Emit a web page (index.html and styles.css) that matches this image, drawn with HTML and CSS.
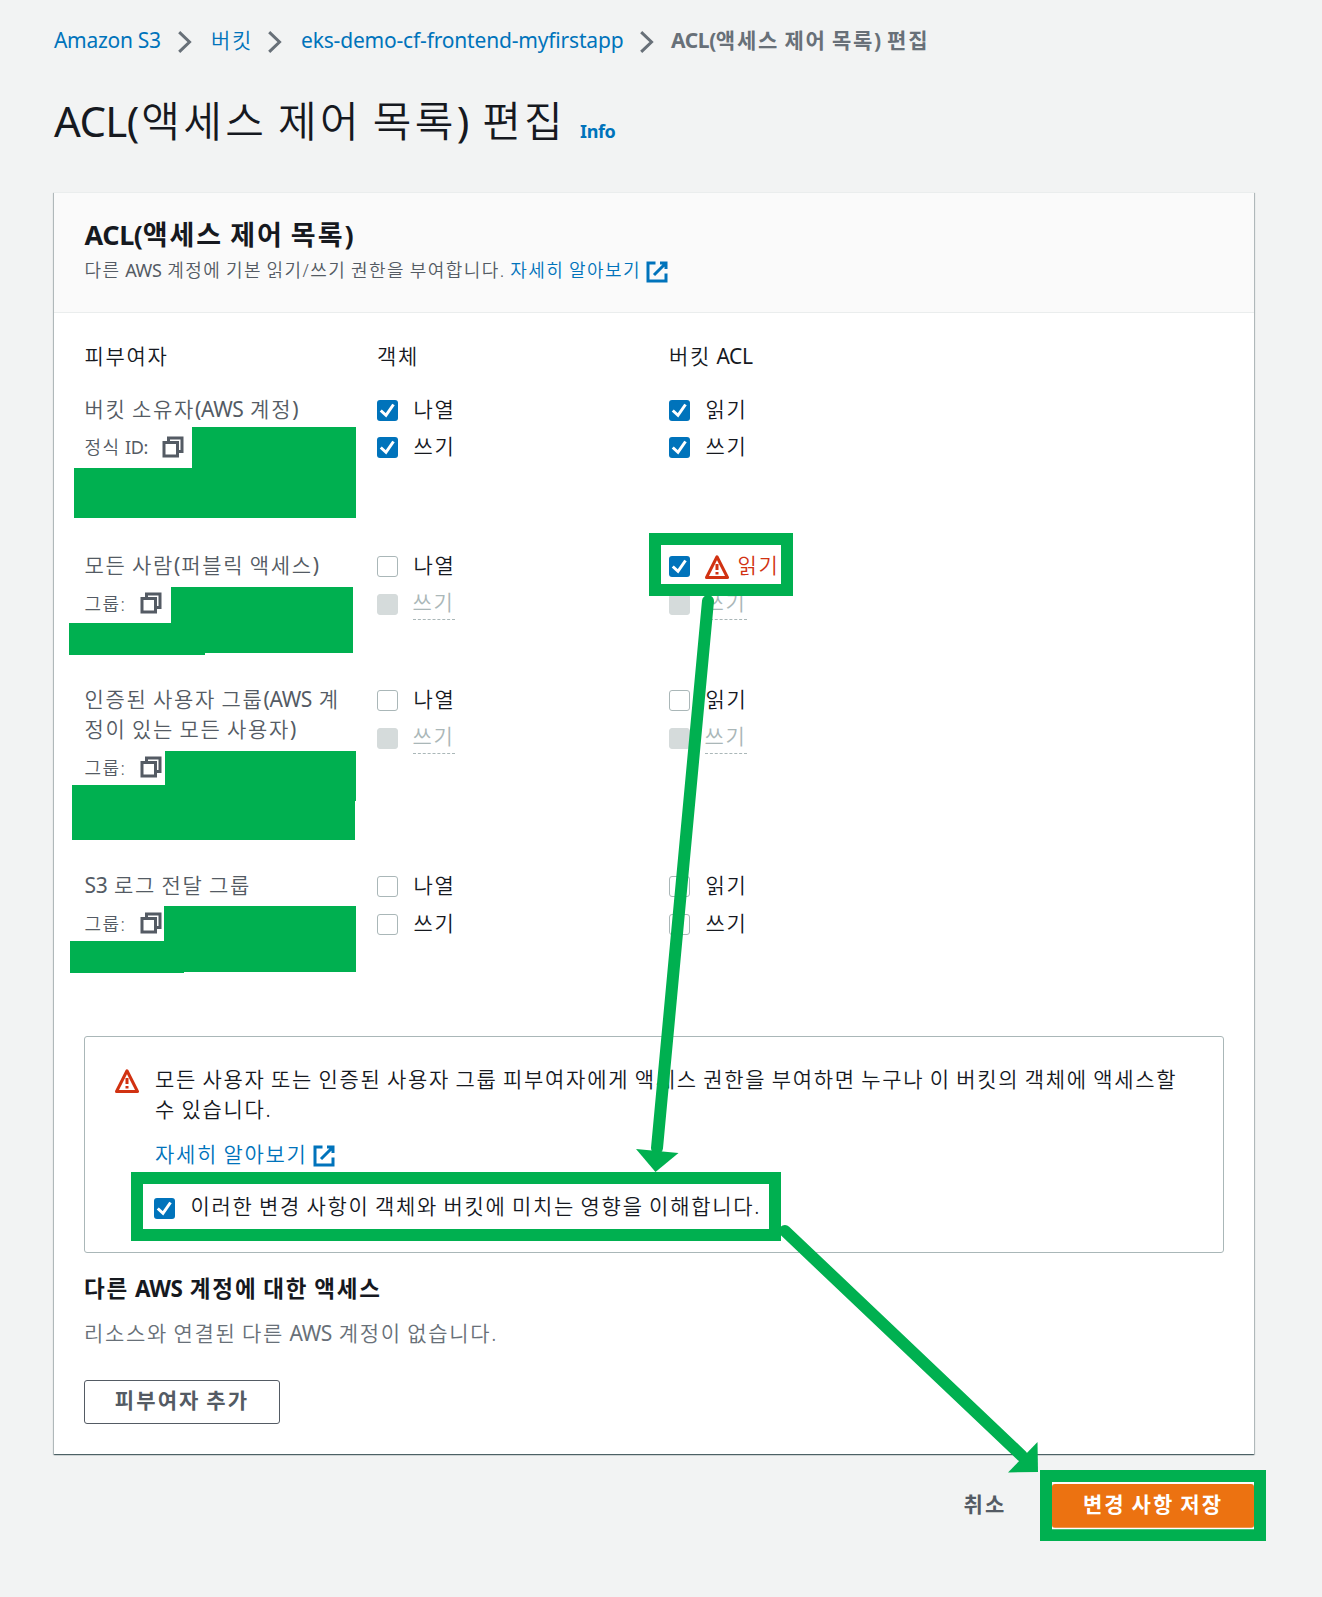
FILE: index.html
```html
<!DOCTYPE html>
<html lang="ko">
<head>
<meta charset="utf-8">
<title>ACL(액세스 제어 목록) 편집</title>
<link rel="stylesheet" href="styles.css">
</head>
<body>
<svg class="defs" aria-hidden="true">
  <symbol id="chevron" viewBox="0 0 14 22"><path d="M1.2 1.2L11.5 11L1.2 20.8" fill="none" stroke="#687078" stroke-width="3"/></symbol>
  <symbol id="external" viewBox="0 0 16 16"><path d="M10 2h4v4M6 10l8-8M14 9.05V14H2V2h5" fill="none" stroke="#0073bb" stroke-width="2"/></symbol>
  <symbol id="copy" viewBox="0 0 16 16"><path d="M2 5h9v9H2zM5 5V2h9v9h-3" fill="none" stroke="#545b64" stroke-width="2"/></symbol>
  <symbol id="warning" viewBox="0 0 16 16"><path d="M8 1.2L15 15H1z" fill="none" stroke="#d13212" stroke-width="2" stroke-linejoin="round"/><path d="M8 6v4M8 11.4v1.6" fill="none" stroke="#d13212" stroke-width="2"/></symbol>
  <symbol id="tick" viewBox="0 0 14 14"><path d="M2.5 7L6 10.2L11 3" fill="none" stroke="#fff" stroke-width="2"/></symbol>
</svg>

<nav class="breadcrumb">
  <a class="latin crumb-root">Amazon S3</a>
  <svg><use href="#chevron"/></svg>
  <a class="crumb-list">버킷</a>
  <svg><use href="#chevron"/></svg>
  <a class="latin crumb-bucket">eks-demo-cf-frontend-myfirstapp</a>
  <svg><use href="#chevron"/></svg>
  <b><span class="latin">ACL(</span>액세스 제어 목록<span class="latin">)</span> 편집</b>
</nav>

<header class="page-title">
  <h1><span class="latin">ACL(</span>액세스 제어 목록<span class="latin">)</span> 편집</h1>
  <a class="latin info">Info</a>
</header>

<main class="card">
  <header class="card-head">
    <h2><span class="latin">ACL(</span>액세스 제어 목록<span class="latin">)</span></h2>
    <p>다른 <span class="latin">AWS</span> 계정에 기본 읽기/쓰기 권한을 부여합니다. <a>자세히 알아보기</a><svg class="icon ext"><use href="#external"/></svg></p>
  </header>
  <section class="card-body">
    <div class="grants">
      <div class="th">피부여자</div><div class="th">객체</div><div class="th">버킷 <span class="latin">ACL</span></div>

      <div class="who">버킷 소유자<span class="latin">(AWS</span> 계정<span class="latin">)</span>
        <div class="sub">정식 <span class="latin">ID:</span><svg class="icon"><use href="#copy"/></svg></div></div>
      <div class="perms">
        <label><i class="box on"><svg><use href="#tick"/></svg></i>나열</label>
        <label><i class="box on"><svg><use href="#tick"/></svg></i>쓰기</label></div>
      <div class="perms">
        <label><i class="box on"><svg><use href="#tick"/></svg></i>읽기</label>
        <label><i class="box on"><svg><use href="#tick"/></svg></i>쓰기</label></div>

      <div class="who">모든 사람<span class="latin">(</span>퍼블릭 액세스<span class="latin">)</span>
        <div class="sub group">그룹:<svg class="icon"><use href="#copy"/></svg></div></div>
      <div class="perms">
        <label><i class="box"></i>나열</label>
        <label class="off"><i class="box"></i><span>쓰기</span></label></div>
      <div class="perms">
        <label class="danger"><i class="box on"><svg><use href="#tick"/></svg></i><svg class="icon"><use href="#warning"/></svg>읽기</label>
        <label class="off"><i class="box"></i><span>쓰기</span></label></div>

      <div class="who">인증된 사용자 그룹<span class="latin">(AWS</span> 계<br>정이 있는 모든 사용자<span class="latin">)</span>
        <div class="sub group">그룹:<svg class="icon"><use href="#copy"/></svg></div></div>
      <div class="perms">
        <label><i class="box"></i>나열</label>
        <label class="off"><i class="box"></i><span>쓰기</span></label></div>
      <div class="perms">
        <label><i class="box"></i>읽기</label>
        <label class="off"><i class="box"></i><span>쓰기</span></label></div>

      <div class="who"><span class="latin">S3</span> 로그 전달 그룹
        <div class="sub group">그룹:<svg class="icon"><use href="#copy"/></svg></div></div>
      <div class="perms">
        <label><i class="box"></i>나열</label>
        <label><i class="box"></i>쓰기</label></div>
      <div class="perms">
        <label><i class="box"></i>읽기</label>
        <label><i class="box"></i>쓰기</label></div>
    </div>

    <div class="alert">
      <svg class="icon"><use href="#warning"/></svg>
      <div>
        <p>모든 사용자 또는 인증된 사용자 그룹 피부여자에게 액세스 권한을 부여하면 누구나 이 버킷의 객체에 액세스할<br>수 있습니다.</p>
        <p class="more"><a>자세히 알아보기</a><svg class="icon ext"><use href="#external"/></svg></p>
        <label><i class="box on"><svg><use href="#tick"/></svg></i>이러한 변경 사항이 객체와 버킷에 미치는 영향을 이해합니다.</label>
      </div>
    </div>

    <h3>다른 <span class="latin">AWS</span> 계정에 대한 액세스</h3>
    <p class="empty">리소스와 연결된 다른 <span class="latin">AWS</span> 계정이 없습니다.</p>
    <button class="btn">피부여자 추가</button>
  </section>
</main>

<footer class="actions">
  <button class="btn link">취소</button>
  <button class="btn primary">변경 사항 저장</button>
</footer>

<svg class="markup" viewBox="0 0 1322 1597" aria-hidden="true">
  <g fill="#00b050" shape-rendering="crispEdges">
    <path d="M192 427H356V518H74V468H192z"/>
    <path d="M171 587H353V653H205V655H69V623H171z"/>
    <path d="M165 751H356V801H355V840H72V785H165z"/>
    <path d="M164 906H356V972H184V973H70V941H164z"/>
  </g>
  <g fill="none" stroke="#00b050" stroke-width="12" shape-rendering="crispEdges">
    <path d="M655 539H787V590H655z"/>
    <path d="M137 1178H775V1235H137z"/>
    <path d="M1046 1476H1260V1535H1046z"/>
  </g>
  <path d="M1052 1483H1254M1052 1528.500H1254" stroke="#fff" stroke-width="1.500"/>
  <g stroke="#00b050" stroke-width="12" stroke-linecap="round">
    <path d="M708 601L657 1148"/><path d="M785 1231L1022 1456"/>
  </g>
  <g fill="#00b050"><path d="M636 1149L678.500 1153L655.500 1172z"/><path d="M1037.500 1442L1038 1472L1008 1472.500z"/></g>
</svg>
</body>
</html>
```
FILE: styles.css
```css
* { box-sizing: border-box; }
body {
  margin: 0; padding-top: 25px; position: relative; height: 1597px; overflow: hidden;
  background: #f2f3f3; color: #16191f;
  font: 350 21px/30px "Noto Sans", "Noto Sans CJK KR", sans-serif;
  letter-spacing: 1.7px; word-spacing: -1.7px; white-space: nowrap;
}
h1, h2, h3, p { margin: 0; }
a { color: #0073bb; text-decoration: none; }
.defs { position: absolute; width: 0; height: 0; }
.latin { font-weight: 400; letter-spacing: -0.4px; word-spacing: 0; margin-right: .06em; }
b .latin, h2 .latin, h3 .latin { font-weight: 700; }
.icon { width: 24px; height: 24px; flex: none; }

.breadcrumb { display: flex; align-items: center; height: 30px; margin-left: 54px; }
.breadcrumb svg { width: 14px; height: 22px; flex: none; margin: 3px 19px 0 17px; }
.breadcrumb .latin { margin-right: 0; }
.crumb-root { width: 107px; letter-spacing: -0.3px; }
.crumb-list { width: 40px; }
.latin.crumb-bucket { width: 322px; letter-spacing: -0.18px; }
.breadcrumb b { color: #687078; font-weight: 700; margin-left: -2px; }
.breadcrumb b .latin:last-child { margin-right: 1px; }

.page-title { display: flex; align-items: baseline; margin: 36px 0 0 54px; height: 101px; }
h1 { font-size: 42px; line-height: 60px; font-weight: 350; letter-spacing: 3.3px; word-spacing: -3.3px; }
h1 .latin { letter-spacing: -0.6px; }
.latin.info { font-size: 18px; font-weight: 700; margin-left: 14px; position: relative; top: 1px; }

.card {
  width: 1200px; height: 1262px; margin-left: 54px; background: #fff;
  box-shadow: 0 1px 1px rgba(0,28,36,.5), 1px 1px 1px rgba(0,28,36,.2), -1px 1px 1px rgba(0,28,36,.2);
  border-top: 1px solid #eaeded;
}
.card-head { height: 120px; background: #fafafa; border-bottom: 1px solid #eaeded; padding: 24px 30px 0 30.5px; }
h2 { font-size: 27px; line-height: 36px; font-weight: 700; letter-spacing: 2px; word-spacing: -2px; }
h2 .latin { margin-right: 0; }
.card-head p { display: flex; align-items: center; white-space: pre; font-size: 18px; line-height: 33px; margin-top: 1px; color: #545b64; letter-spacing: 1.45px; word-spacing: -1.45px; }
.card-head .ext { margin: 2px 0 0 4px; }

.card-body { padding: 27px 30px 0; }
.grants { display: grid; grid-template-columns: 292.5px 292px 1fr; grid-template-rows: 52.5px 156.5px 134px 186px 166px; padding-left: .5px; margin-top: 1px; }
.who { color: #545b64; }
.sub { display: flex; align-items: center; height: 30px; margin-top: 8.5px; font-size: 18px; letter-spacing: 1.45px; white-space: pre; }
.sub .icon { margin-left: 12px; margin-top: -1px; }
.group .icon { margin-left: 13px; }
.perms { display: flex; flex-direction: column; gap: 7.5px; }
label { display: flex; align-items: center; height: 30px; }
.box { width: 21px; height: 21px; flex: none; margin: 3px 15.5px 0 0; border: 1px solid #aab7b8; border-radius: 3px; background: #fff; }
.box svg { display: block; width: 21px; height: 21px; }
.box.on { border: 0; background: #0073bb; }
.off { color: #aab7b8; }
.off .box { background: #d5dbdb; border-color: #d5dbdb; }
.off span { border-bottom: 1px dashed #aab7b8; height: 33px; margin: 2px 0 0 -1px; }
.danger { color: #d13212; }
.danger .icon { margin: 3px 9px 0 -1px; }

.alert { display: flex; height: 217px; border: 1px solid #aab7b8; border-radius: 3px; padding: 27px 30px; }
.alert > .icon { margin: 5px 16px 0 0; }
.more { display: flex; align-items: center; margin-top: 15px; }
.more .ext { margin: 3px 0 0 4px; }
.alert label { margin: 22px 0 0 -1px; }
.alert .box { margin-top: 4px; }
h3 { font-size: 22.5px; line-height: 30px; font-weight: 700; margin-top: 21px; letter-spacing: 1.85px; word-spacing: -1.85px; }
.empty { color: #687078; margin-top: 14px; }
.btn { display: block; font: inherit; font-weight: 700; letter-spacing: 2.1px; word-spacing: -1.7px; width: 196px; height: 44px; margin-top: 32px; padding: 0 0 4px; border: 1px solid #545b64; border-radius: 3px; background: #fff; color: #545b64; }
.actions { display: flex; justify-content: flex-end; margin: 30px 68px 0 0; }
.actions .btn { margin: 0; }
.btn.link { border: 0; background: none; width: 134px; }
.btn.primary { border: 0; background: #ec7211; color: #fff; width: 202px; }

.markup { position: absolute; left: 0; top: 0; width: 1322px; height: 1597px; pointer-events: none; }
```
